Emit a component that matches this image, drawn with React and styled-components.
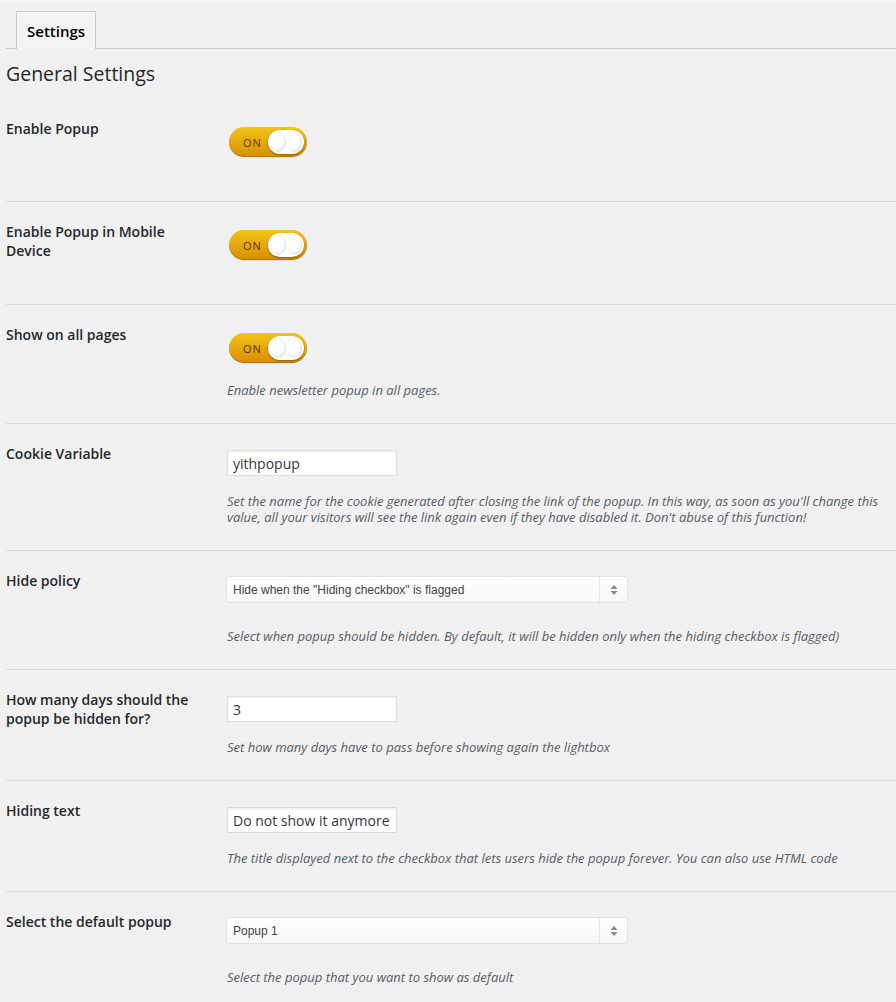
import React from 'react';
import styled, { createGlobalStyle } from 'styled-components';

const GlobalStyle = createGlobalStyle`
  html, body {
    margin: 0;
    padding: 0;
    background: #f1f1f1;
  }
  body {
    font-family: "Open Sans", "Liberation Sans", sans-serif;
    color: #23282d;
    font-size: 13px;
  }
`;

const Page = styled.div`
  width: 896px;
  padding: 0 0 0 6px;
  box-sizing: border-box;
  border-top: 2px solid #f6f6f6;
`;

const TabBar = styled.div`
  display: flex;
  padding: 9px 0 0 10px;
  border-bottom: 1px solid #cccccc;
`;

const Tab = styled.div`
  height: 38px;
  padding: 0 10px;
  display: flex;
  align-items: center;
  border: 1px solid #cccccc;
  border-bottom: none;
  background: #f4f4f4;
  font-size: 15px;
  font-weight: 600;
  color: #000;
  margin-bottom: -1px;
  box-sizing: border-box;
`;

const Heading = styled.h2`
  margin: 0;
  padding: 12px 0 0;
  font-size: 19.5px;
  font-weight: 400;
  line-height: 26px;
  color: #23282d;
  height: 49px;
  box-sizing: border-box;
`;

const Row = styled.div`
  display: grid;
  grid-template-columns: 221px 1fr;
  border-top: 1px solid ${(p) => (p.$first ? 'transparent' : '#dcdcdc')};
`;

const Label = styled.div`
  width: 200px;
  padding: 20px 0 0 0;
  font-size: 14px;
  font-weight: 600;
  line-height: 19px;
  color: #23282d;
`;

const Field = styled.div`
  padding: ${(p) => p.$top}px 10px 25px 0;
`;

const ToggleTrack = styled.div`
  width: 78px;
  height: 30px;
  margin: 0 0 19px 2px;
  border-radius: 15px;
  background: linear-gradient(#f2c418, #e3a30a 60%, #d98f00);
  box-shadow: inset 0 -1px 1px rgba(120, 70, 0, 0.35), 0 1px 1px rgba(0, 0, 0, 0.08);
  display: flex;
  align-items: center;
  justify-content: space-between;
  padding: 0 3px 0 14px;
  box-sizing: border-box;
`;

const ToggleText = styled.span`
  font-family: "Open Sans", "Liberation Sans", sans-serif;
  font-size: 11px;
  letter-spacing: 1px;
  color: #5b3800;
`;

const Knob = styled.div`
  width: 36px;
  height: 24px;
  border-radius: 12px;
  background: #ffffff;
  box-shadow: 0 1px 2px rgba(0, 0, 0, 0.35);
  display: flex;
  align-items: center;
  justify-content: space-between;
  padding: 0 2px;
  box-sizing: border-box;
`;

const KnobDot = styled.span`
  width: 18px;
  height: 20px;
  border-radius: 50%;
  background: radial-gradient(circle at 40% 40%, #ffffff 40%, #e2e2e2 100%);
  box-shadow: inset -1px 0 1px rgba(0, 0, 0, 0.08);
`;

const TextInput = styled.div`
  width: 170px;
  height: 26px;
  margin: 0 0 17px 0;
  background: #ffffff;
  border: 1px solid #dddddd;
  box-shadow: inset 0 1px 2px rgba(0, 0, 0, 0.07);
  box-sizing: border-box;
  padding: 0 5px;
  display: flex;
  align-items: center;
  font-size: 14px;
  color: #32373c;
  white-space: nowrap;
  overflow: hidden;
`;

const Select = styled.div`
  width: 402px;
  height: 27px;
  margin: 0 0 25px -1px;
  display: flex;
  background: linear-gradient(#ffffff, #f7f7f7);
  border: 1px solid #e2e2e2;
  border-radius: 3px;
  box-sizing: border-box;
  font-family: "Liberation Sans", Arial, sans-serif;
  font-size: 12px;
  color: #444444;
`;

const SelectValue = styled.div`
  flex: 1;
  display: flex;
  align-items: center;
  padding: 0 6px;
`;

const SelectArrow = styled.div`
  width: 27px;
  border-left: 1px solid #e6e6e6;
  display: flex;
  align-items: center;
  justify-content: center;
`;

const Description = styled.p`
  margin: 0;
  font-size: 13px;
  font-style: italic;
  line-height: 16px;
  color: #555d66;
`;

const Toggle = () => (
  <ToggleTrack>
    <ToggleText>ON</ToggleText>
    <Knob>
      <KnobDot />
      <KnobDot />
    </Knob>
  </ToggleTrack>
);

const Dropdown = ({ value }) => (
  <Select>
    <SelectValue>{value}</SelectValue>
    <SelectArrow>
      <svg width="8" height="12" viewBox="0 0 8 12">
        <path d="M4 1 L7.5 5 L0.5 5 Z" fill="#8a8a8a" />
        <path d="M4 11 L7.5 7 L0.5 7 Z" fill="#8a8a8a" />
      </svg>
    </SelectArrow>
  </Select>
);

const rows = [
  { label: 'Enable Popup', type: 'toggle' },
  { label: 'Enable Popup in Mobile Device', type: 'toggle' },
  { label: 'Show on all pages', type: 'toggle', desc: 'Enable newsletter popup in all pages.' },
  {
    label: 'Cookie Variable',
    type: 'input',
    value: 'yithpopup',
    desc:
      "Set the name for the cookie generated after closing the link of the popup. In this way, as soon as you'll change this value, all your visitors will see the link again even if they have disabled it. Don't abuse of this function!",
  },
  {
    label: 'Hide policy',
    type: 'select',
    value: 'Hide when the "Hiding checkbox" is flagged',
    desc: 'Select when popup should be hidden. By default, it will be hidden only when the hiding checkbox is flagged)',
  },
  {
    label: 'How many days should the popup be hidden for?',
    type: 'input',
    value: '3',
    desc: 'Set how many days have to pass before showing again the lightbox',
  },
  {
    label: 'Hiding text',
    type: 'input',
    value: 'Do not show it anymore',
    desc: 'The title displayed next to the checkbox that lets users hide the popup forever. You can also use HTML code',
  },
  {
    label: 'Select the default popup',
    type: 'select',
    value: 'Popup 1',
    desc: 'Select the popup that you want to show as default',
  },
];

const topFor = { toggle: 28, input: 26, select: 25 };

export default function App() {
  return (
    <>
      <GlobalStyle />
      <Page>
        <TabBar>
          <Tab>Settings</Tab>
        </TabBar>
        <Heading>General Settings</Heading>
        {rows.map((r, i) => (
          <Row key={r.label} $first={i === 0}>
            <Label>{r.label}</Label>
            <Field $top={topFor[r.type]}>
              {r.type === 'toggle' && <Toggle />}
              {r.type === 'input' && <TextInput>{r.value}</TextInput>}
              {r.type === 'select' && <Dropdown value={r.value} />}
              {r.desc && <Description>{r.desc}</Description>}
            </Field>
          </Row>
        ))}
      </Page>
    </>
  );
}
